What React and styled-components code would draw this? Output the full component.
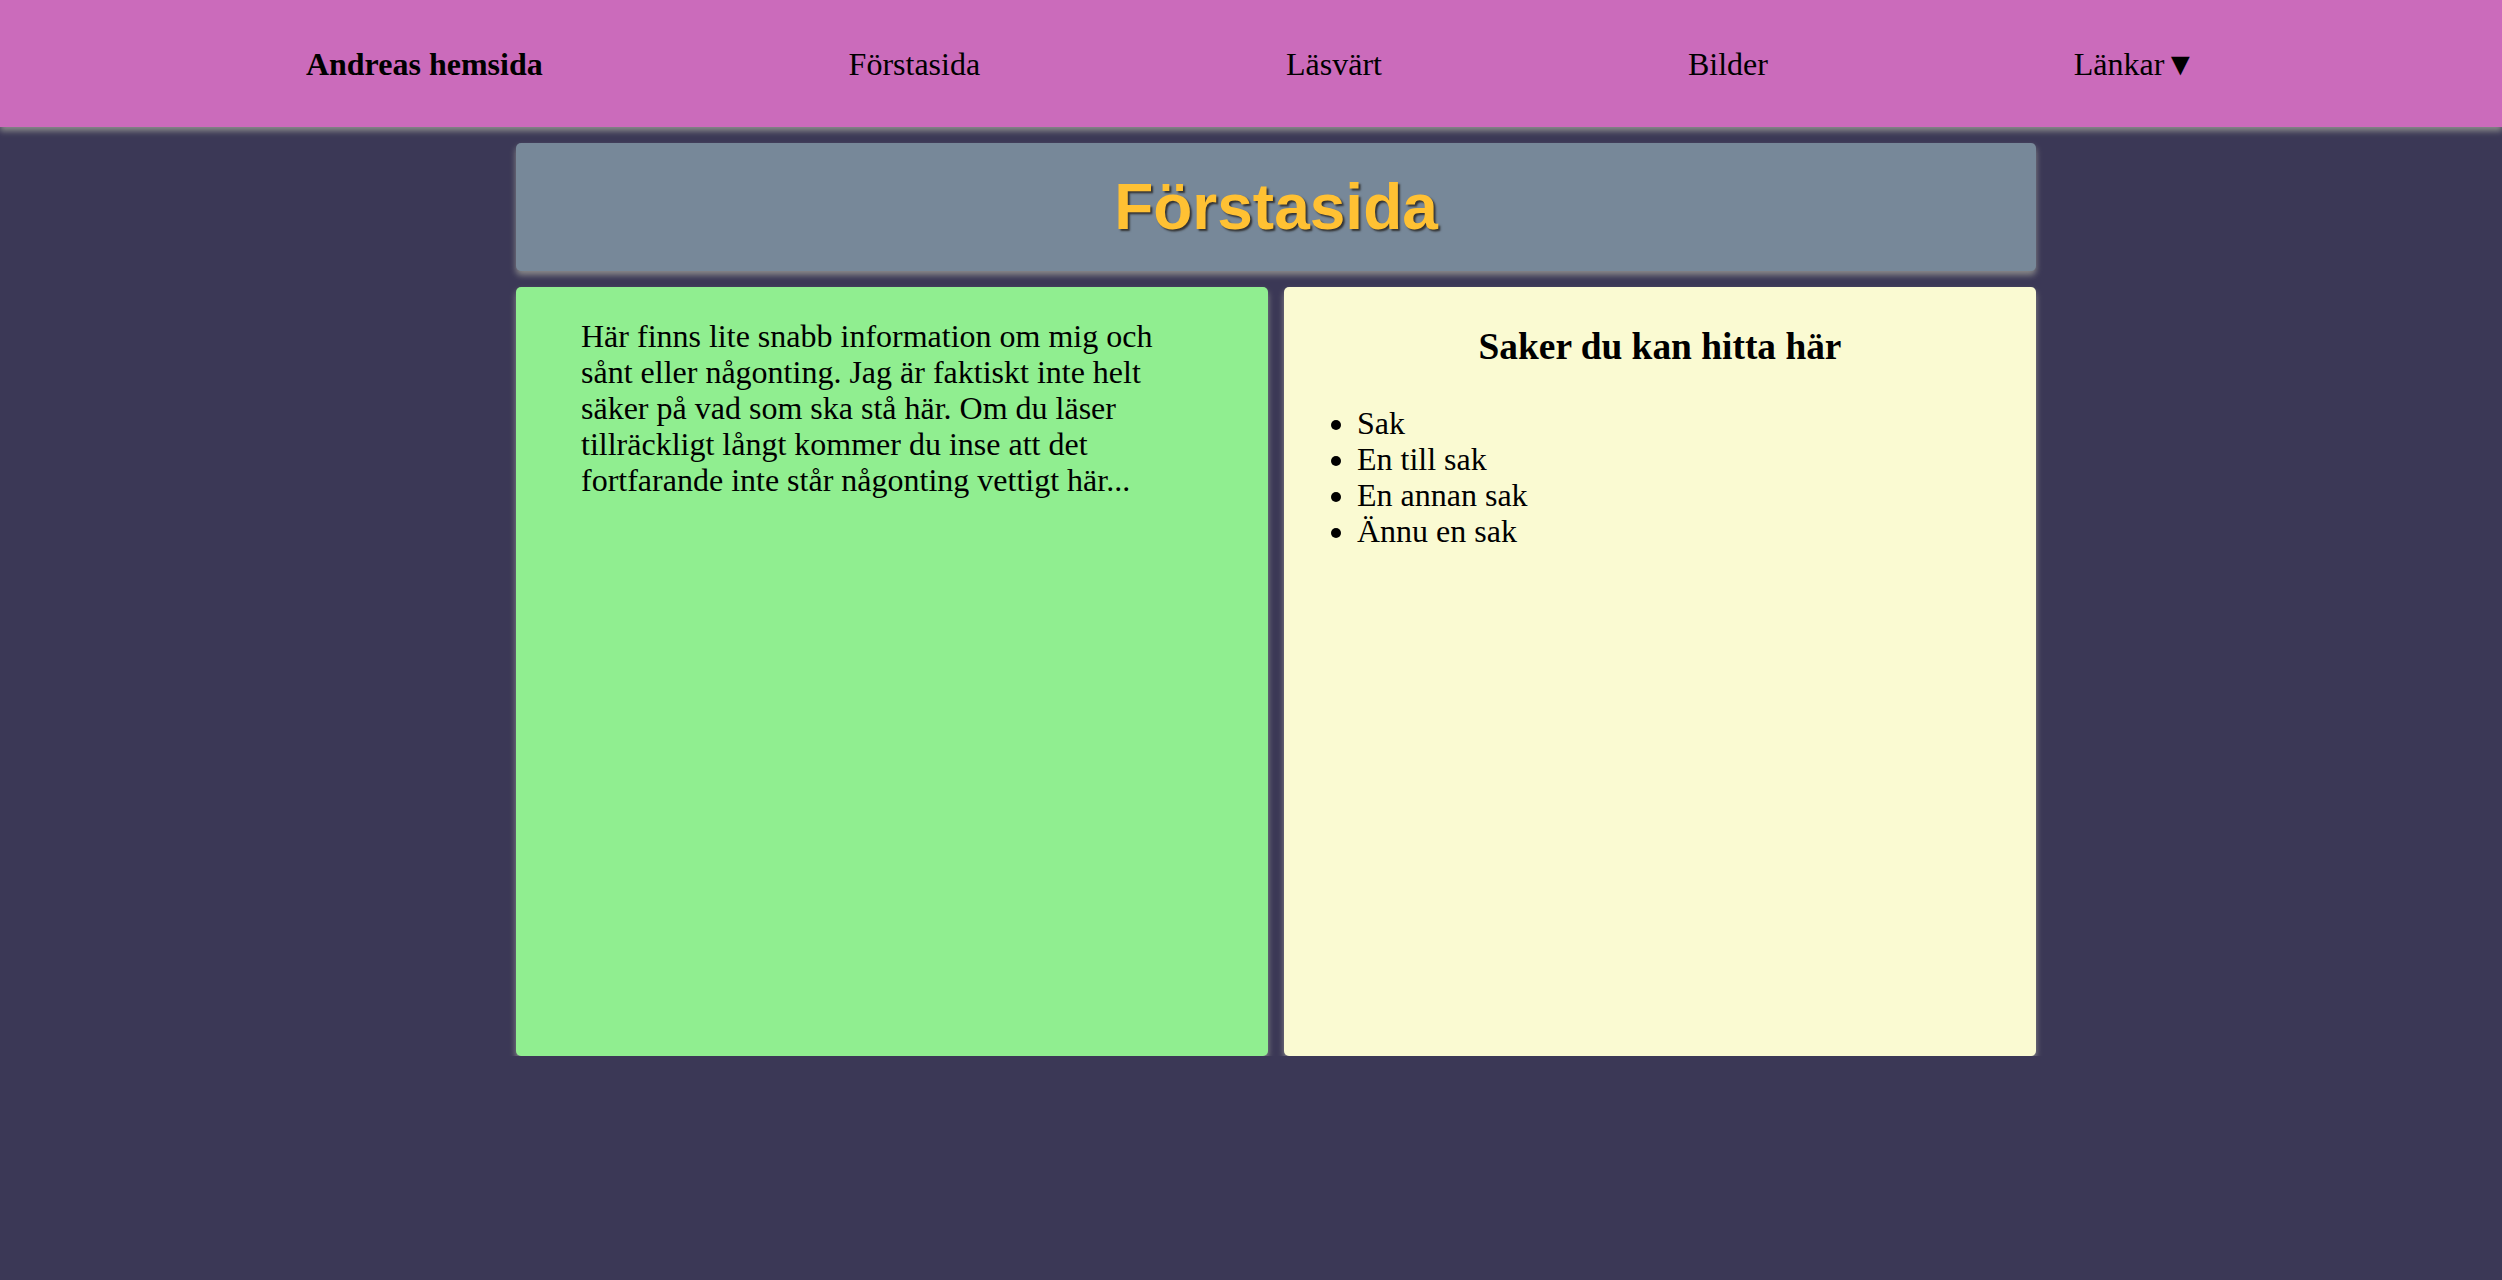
import React from "react";
import styled, { createGlobalStyle } from "styled-components";

const GlobalStyle = createGlobalStyle`
  html, body {
    margin: 0;
    padding: 0;
    background-color: #3b3856;
    font-family: "Liberation Serif", "Times New Roman", serif;
    font-size: 32px;
    line-height: 36px;
  }
`;

const NavBar = styled.nav`
  height: 127px;
  background-color: #cb6bbb;
  display: flex;
  align-items: center;
  justify-content: space-evenly;
  box-shadow: 0 4px 6px #8a8a8a;
`;

const NavItem = styled.a`
  color: #000;
  text-decoration: none;
  font-weight: ${(props) => (props.brand ? "bold" : "normal")};
  cursor: pointer;
`;

const Main = styled.main`
  width: 1520px;
  margin: 16px 0 0 516px;
  display: flex;
  flex-direction: column;
  gap: 16px;
`;

const Header = styled.header`
  height: 128px;
  background-color: #778899;
  border-radius: 5px;
  box-shadow: 0 4px 6px #8a8a8a;
  display: flex;
  align-items: center;
  justify-content: center;
`;

const Title = styled.h1`
  margin: 0;
  font-family: "Liberation Sans", Arial, sans-serif;
  font-size: 64px;
  line-height: normal;
  font-weight: bold;
  color: #ffc133;
  text-shadow: 2px 2px 2px #333;
`;

const Columns = styled.div`
  display: grid;
  grid-template-columns: 1fr 1fr;
  gap: 16px;
`;

const Card = styled.section`
  height: 769px;
  box-sizing: border-box;
  background-color: ${(props) => props.bg};
  border-radius: 5px;
  box-shadow: 0 4px 6px #8a8a8a;
  padding: 0 ${(props) => props.padRight || "65px"} 0 65px;
  overflow: hidden;
`;

const Intro = styled.p`
  margin: 31px 0 0;
`;

const CardHeading = styled.h3`
  margin: 38px 0 37px;
  text-align: center;
  font-size: 37.4px;
  line-height: normal;
  font-weight: bold;
`;

const ItemList = styled.ul`
  margin: 0 0 0 -32px;
  padding-left: 40px;
`;

export default function App() {
  return (
    <>
      <GlobalStyle />
      <NavBar>
        <NavItem brand>Andreas hemsida</NavItem>
        <NavItem>Förstasida</NavItem>
        <NavItem>Läsvärt</NavItem>
        <NavItem>Bilder</NavItem>
        <NavItem>Länkar▼</NavItem>
      </NavBar>
      <Main>
        <Header>
          <Title>Förstasida</Title>
        </Header>
        <Columns>
          <Card bg="#90ee90" padRight="100px">
            <Intro>
              Här finns lite snabb information om mig och sånt eller
              någonting. Jag är faktiskt inte helt säker på vad som ska stå
              här. Om du läser tillräckligt långt kommer du inse att det
              fortfarande inte står någonting vettigt här...
            </Intro>
          </Card>
          <Card bg="#fafad2">
            <CardHeading>Saker du kan hitta här</CardHeading>
            <ItemList>
              <li>Sak</li>
              <li>En till sak</li>
              <li>En annan sak</li>
              <li>Ännu en sak</li>
            </ItemList>
          </Card>
        </Columns>
      </Main>
    </>
  );
}
